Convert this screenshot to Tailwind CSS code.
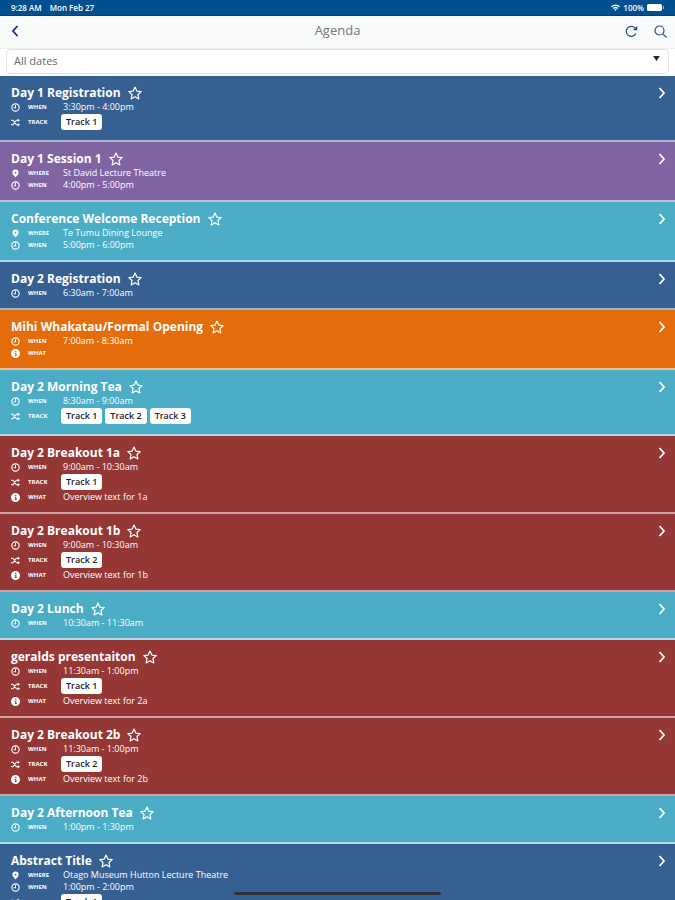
<!DOCTYPE html>
<html lang="en">
<head>
    <meta charset="UTF-8">
    <meta name="viewport" content="width=device-width, initial-scale=1.0">
    <title>Agenda</title>
    <script src="https://cdn.jsdelivr.net/npm/@tailwindcss/browser@4"></script>
</head>
<body class="bg-white font-['Open_Sans',sans-serif]">
    <!-- Icon sprites -->
    <svg class="hidden" aria-hidden="true">
        <symbol id="clock" viewBox="0 0 16 16"><circle cx="8" cy="8" r="6.5" fill="none" stroke="currentColor" stroke-width="2"/><path d="M8 3.5V8.5H4.8" fill="none" stroke="currentColor" stroke-width="1.8"/></symbol>
        <symbol id="pin" viewBox="0 0 16 16"><path fill-rule="evenodd" fill="currentColor" d="M8 1a5.500 5.500 0 0 0-5.500 5.500C2.500 9.500 6 12 8 15c2-3 5.500-5.500 5.500-8.500A5.500 5.500 0 0 0 8 1zm0 4a1.600 1.600 0 1 1 0 3.200 1.600 1.600 0 0 1 0-3.200z"/></symbol>
        <symbol id="shuffle" viewBox="0 0 16 16"><path d="M0 4h3.500l6 8H13M0 12h3.500l6-8H13" fill="none" stroke="currentColor" stroke-width="2"/><path fill="currentColor" d="M12 1l4 3-4 3zM12 9l4 3-4 3z"/></symbol>
        <symbol id="info" viewBox="0 0 16 16"><path fill-rule="evenodd" fill="currentColor" d="M8 0a8 8 0 1 0 0 16A8 8 0 0 0 8 0zM7 3h2.500v2H7zM6.500 6.500h3v4.500h1v1.500h-4V11h1V8h-1z"/></symbol>
        <symbol id="star" viewBox="0 0 16 16"><path d="M8 1.200l2.100 4.600 5 .6-3.700 3.400 1 5L8 12.300l-4.400 2.500 1-5L.9 6.400l5-.6z" fill="none" stroke="currentColor" stroke-width="1.400" stroke-linejoin="round"/></symbol>
        <symbol id="chevron" viewBox="0 0 8 12"><path d="M1.500 1l4.500 5-4.500 5" fill="none" stroke="currentColor" stroke-width="1.800"/></symbol>
    </svg>

    <div class="flex flex-col h-screen">
        <!-- Status bar -->
        <div class="flex items-center justify-between h-4 shrink-0 px-[11px] bg-[#00508f] border-b border-[#003a80] text-white text-[8px] font-semibold">
            <div class="flex gap-2">
                <span>9:28 AM</span>
                <span>Mon Feb 27</span>
            </div>
            <div class="flex items-center gap-[3px]">
                <svg class="w-[9px] h-[7px]" viewBox="0 0 18 14" fill="none" stroke="currentColor" stroke-width="3"><path d="M1 5.500a11.500 11.500 0 0 1 16 0M4.500 9a6.500 6.500 0 0 1 9 0"/><path d="M6.500 10.500L9 14l2.500-3.500z" fill="currentColor" stroke="none"/></svg>
                <span>100%</span>
                <svg class="w-[17px] h-[7px]" viewBox="0 0 17 7" fill="currentColor"><rect width="15" height="7" rx="1.500"/><rect x="16" y="2" width="1" height="3" opacity=".6"/></svg>
            </div>
        </div>

        <!-- Toolbar -->
        <header class="grid grid-cols-3 items-center h-[33px] shrink-0 px-2 pb-[2px] bg-[#f9fafa] border-b border-[#eeeeee] text-[#2b4a86]">
            <button aria-label="Back" class="flex w-4 pl-[3px] text-[#1c2a86]">
                <svg class="w-[8px] h-[12px]" viewBox="0 0 8 12" fill="none" stroke="currentColor" stroke-width="1.800"><path d="M6.500 1L2 6l4.500 5"/></svg>
            </button>
            <h1 class="text-center text-[13px] text-[#777777]">Agenda</h1>
            <div class="flex justify-end gap-4">
                <button aria-label="Refresh">
                    <svg class="w-[13px] h-[13px]" viewBox="0 0 13 13" fill="none" stroke="currentColor" stroke-width="1.200"><path d="M10.800 8.500A5 5 0 1 1 10 3"/><path d="M12.300.8v4.400H8z" fill="currentColor" stroke="none"/></svg>
                </button>
                <button aria-label="Search">
                    <svg class="w-[13px] h-[13px]" viewBox="0 0 13 13" fill="none" stroke="currentColor" stroke-width="1.200"><circle cx="5.500" cy="5.500" r="4.500"/><path d="M8.800 8.800l3.700 3.700"/></svg>
                </button>
            </div>
        </header>

        <!-- Date filter -->
        <div class="relative shrink-0 h-[27px] px-[6px]">
            <select aria-label="Dates" class="block w-full h-[25px] px-[7px] appearance-none rounded-[4px] border border-[#e4e4e4] bg-white text-[11px] text-[#666666]">
                <option>All dates</option>
            </select>
            <svg class="absolute right-[15px] top-[7px] w-[7px] h-[5px] pointer-events-none" viewBox="0 0 8 6" fill="#222222"><path d="M0 0h8L4 6z"/></svg>
        </div>

        <!-- Sessions -->
        <ul id="agenda" class="flex-1 overflow-y-auto [scrollbar-width:none] text-white"></ul>
    </div>

    <!-- Home indicator -->
    <div class="fixed bottom-[5px] inset-x-0 mx-auto w-[207px] h-[3px] rounded-full bg-[#2e3238]"></div>

    <script>
        const colors = {
            blue: 'bg-[#376092]',
            purple: 'bg-[#8064a2]',
            teal: 'bg-[#4bacc6]',
            orange: 'bg-[#e46c0a]',
            red: 'bg-[#953735]'
        };

        const sessions = [
            { title: 'Day 1 Registration', color: 'blue', when: '3:30pm - 4:00pm', tracks: ['Track 1'] },
            { title: 'Day 1 Session 1', color: 'purple', where: 'St David Lecture Theatre', when: '4:00pm - 5:00pm' },
            { title: 'Conference Welcome Reception', color: 'teal', where: 'Te Tumu Dining Lounge', when: '5:00pm - 6:00pm' },
            { title: 'Day 2 Registration', color: 'blue', when: '6:30am - 7:00am' },
            { title: 'Mihi Whakatau/Formal Opening', color: 'orange', when: '7:00am - 8:30am', what: '' },
            { title: 'Day 2 Morning Tea', color: 'teal', when: '8:30am - 9:00am', tracks: ['Track 1', 'Track 2', 'Track 3'] },
            { title: 'Day 2 Breakout 1a', color: 'red', when: '9:00am - 10:30am', tracks: ['Track 1'], what: 'Overview text for 1a' },
            { title: 'Day 2 Breakout 1b', color: 'red', when: '9:00am - 10:30am', tracks: ['Track 2'], what: 'Overview text for 1b' },
            { title: 'Day 2 Lunch', color: 'teal', when: '10:30am - 11:30am' },
            { title: 'geralds presentaiton', color: 'red', when: '11:30am - 1:00pm', tracks: ['Track 1'], what: 'Overview text for 2a' },
            { title: 'Day 2 Breakout 2b', color: 'red', when: '11:30am - 1:00pm', tracks: ['Track 2'], what: 'Overview text for 2b' },
            { title: 'Day 2 Afternoon Tea', color: 'teal', when: '1:00pm - 1:30pm' },
            { title: 'Abstract Title', color: 'blue', where: 'Otago Museum Hutton Lecture Theatre', when: '1:00pm - 2:00pm', tracks: ['Track 1'] }
        ];

        function line(icon, label, value, height = 'h-3') {
            return `
                <div class="flex items-center ${height}">
                    <svg class="w-[9px] h-[9px] shrink-0"><use href="#${icon}"/></svg>
                    <dt class="w-[35px] ml-2 shrink-0 text-[6px] font-bold">${label}</dt>
                    <dd class="flex text-[9px] leading-3">${value}</dd>
                </div>`;
        }

        function row(s) {
            let details = '';
            if (s.where) details += line('pin', 'WHERE', s.where);
            details += line('clock', 'WHEN', s.when);
            if (s.tracks) {
                const tags = s.tracks.map(t => `<span class="px-[5px] rounded-[3px] bg-white text-[#222222] font-semibold leading-4">${t}</span>`).join('');
                details += line('shuffle', 'TRACK', `<span class="flex gap-[3px] -ml-[2px]">${tags}</span>`, 'h-[18px]');
            }
            if (s.what !== undefined) details += line('info', 'WHAT', s.what);

            return `
                <li class="flex items-start justify-between pt-2 pb-[9px] pl-[11px] pr-[9px] border-b-2 border-white/55 ${colors[s.color]}">
                    <div>
                        <div class="flex items-center gap-[7px] h-[17px]">
                            <h2 class="text-xs font-bold">${s.title}</h2>
                            <button aria-label="Add to favourites"><svg class="w-[14px] h-[14px]"><use href="#star"/></svg></button>
                        </div>
                        <dl>${details}</dl>
                    </div>
                    <a href="#" aria-label="Open ${s.title}" class="flex items-center h-[17px]"><svg class="w-[8px] h-[12px]"><use href="#chevron"/></svg></a>
                </li>`;
        }

        document.getElementById('agenda').innerHTML = sessions.map(row).join('');
    </script>
</body>
</html>
